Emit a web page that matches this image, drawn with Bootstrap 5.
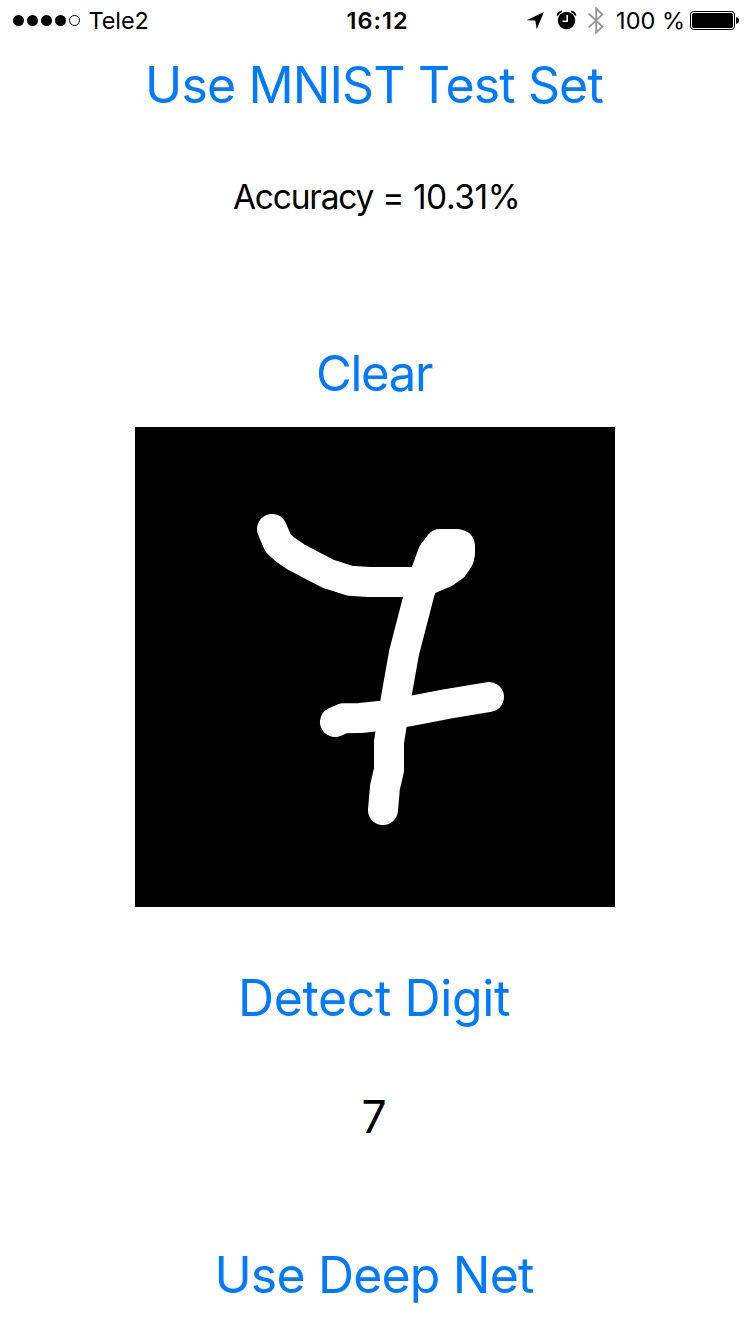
<!DOCTYPE html>
<html lang="en">
<head>
<meta charset="utf-8">
<meta name="viewport" content="width=device-width, initial-scale=1">
<title>Digit recognition</title>
<link href="https://cdn.jsdelivr.net/npm/bootstrap@5.3.0/dist/css/bootstrap.min.css" rel="stylesheet">
<style>
body { font-family: Inter, "Liberation Sans", sans-serif; color: #000; background: #fff; font-kerning: normal; }
.screen { height: 1334px; overflow: hidden; }
.status { height: 40px; font-size: 23.5px; line-height: 40px; }
.status svg { display: block; flex: none; }
.status span, .clock { padding-top: 2px; }
.side { flex: 1 1 0; }
.carrier { margin-left: 7.5px; letter-spacing: -.1px; }
.clock { font-weight: 600; letter-spacing: 1px; padding-left: 5px; }
.percent { margin-left: 6px; margin-right: 5px; }
.action { font-size: 50px; line-height: 60px; color: #007aff; font-weight: 400; white-space: nowrap; border: 0; background: none; padding: 0 2px 0 0; }
.accuracy { font-size: 33.5px; line-height: 40px; margin-top: 62px; padding-left: 3px; letter-spacing: -.45px; }
.accuracy span { letter-spacing: -1.2px; }
.digit { font-size: 44.5px; line-height: 54px; margin: 62px 2px 0 0; }
.test-set { margin-top: 15px; letter-spacing: -.87px; }
.clear-pad { margin-top: 127px; font-size: 49px; letter-spacing: -1.3px; }
.pad { width: 480px; height: 480px; margin-top: 23px; background: #000; }
.detect { margin-top: 61px; letter-spacing: -.4px; }
.deep { margin-top: 101px; letter-spacing: -.83px; }
</style>
</head>
<body>
<div class="screen d-flex flex-column align-items-center">
  <header class="status w-100 d-flex align-items-center text-nowrap">
    <div class="side d-flex align-items-center">
      <svg width="81" height="40" viewBox="0 0 81 40"><circle cx="18.5" cy="20.5" r="5.5"/><circle cx="32.5" cy="20.5" r="5.5"/><circle cx="46.5" cy="20.5" r="5.5"/><circle cx="60.5" cy="20.5" r="5.5"/><circle cx="74.5" cy="20.5" r="5" fill="none" stroke="#000"/></svg>
      <span class="carrier">Tele2</span>
    </div>
    <div class="clock">16:12</div>
    <div class="side d-flex align-items-center justify-content-end">
      <svg width="90" height="40" viewBox="520 0 90 40">
        <path d="M526.5 20.2L544 12L536.7 29.3L535.3 20.5Z"/>
        <circle cx="566.5" cy="20.5" r="8.7"/>
        <path d="M557.4 15.6Q558.2 12.2 561.8 11.4M575.6 15.6Q574.8 12.2 571.2 11.4" fill="none" stroke="#000" stroke-width="1.7"/>
        <path d="M567.2 15V21.2H562.5" fill="none" stroke="#fff" stroke-width="1.5"/>
        <path d="M588.6 13.5L602.4 26.6L596.2 32.5V8.5L602.4 14.5L588.6 27.6" fill="none" stroke="#999" stroke-width="1.9"/>
      </svg>
      <span class="percent">100 %</span>
      <svg width="60" height="40" viewBox="690 0 60 40"><rect x="690.5" y="11.5" width="44" height="18" rx="3" fill="#fff" stroke="#000"/><rect x="692" y="13" width="41" height="15" rx="1.7"/><path d="M736 17.2Q739 17.5 739 20.5T736 23.8Z"/></svg>
    </div>
  </header>
  <button class="action test-set" type="button">Use MNIST Test Set</button>
  <div class="accuracy text-nowrap"><span>Accuracy</span> = 10.31%</div>
  <button class="action clear-pad" type="button">Clear</button>
  <svg class="pad flex-shrink-0" viewBox="135 427 480 480" role="img" aria-label="Drawing pad">
    <g fill="none" stroke="#fff" stroke-width="30" stroke-linecap="round" stroke-linejoin="round">
      <path d="M272 529L278 543L285 549.5L296 557L328 573.7L350 580.7L369 582H425L430 579L444 573L453.5 566.5L459 558L460 553V545L457 544H440L433 553L426 572L419 595L404 653L396 698L389 742V770L385 787L383 810"/>
      <path d="M335 722L343.5 718.2L360 718L380 716L408 711.5L447 704L489 697"/>
    </g>
    <path d="M428 550H462V570H428Z" fill="#fff"/>
  </svg>
  <button class="action detect" type="button">Detect Digit</button>
  <div class="digit">7</div>
  <button class="action deep" type="button">Use Deep Net</button>
</div>
<script src="https://cdn.jsdelivr.net/npm/bootstrap@5.3.0/dist/js/bootstrap.bundle.min.js"></script>
</body>
</html>
